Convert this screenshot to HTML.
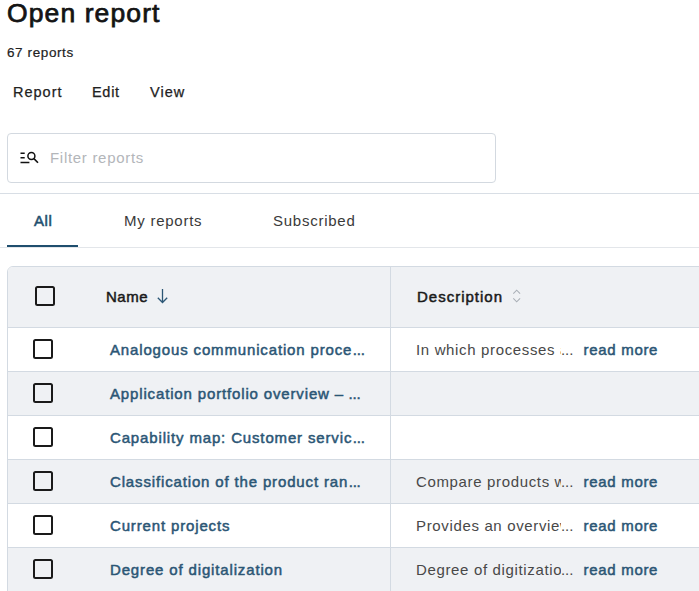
<!DOCTYPE html>
<html><head><meta charset="utf-8">
<style>
*{box-sizing:border-box;margin:0;padding:0}
html,body{width:699px;height:591px;overflow:hidden;background:#fff;font-family:"Liberation Sans",sans-serif;color:#1d1d1f}
.abs{position:absolute;white-space:nowrap}
#title{left:7px;top:-3px;font-size:26.5px;color:#141414;line-height:32px;letter-spacing:1.1px;-webkit-text-stroke:0.75px #141414}
#count{left:7px;top:45px;font-size:13.5px;color:#222;line-height:16px;letter-spacing:0.6px;-webkit-text-stroke:0.2px #222}
.menu{top:83px;font-size:14.5px;color:#222;line-height:18px;-webkit-text-stroke:0.25px #222;letter-spacing:0.7px}
#search{left:7px;top:133px;width:489px;height:50px;border:1px solid #d3d9e0;border-radius:4px}
#sep1{left:0;top:193px;width:699px;height:1px;background:#d8dee5}
.tab{top:212px;font-size:15px;line-height:18px;color:#3a3a3a;letter-spacing:0.75px}
#tabline{left:0;top:247px;width:699px;height:1px;background:#e3e6ea}
#tabsel{left:7px;top:245px;width:71px;height:2px;background:#1f4e6e}
#table{left:7px;top:266px;width:720px;height:340px;border:1px solid #d3dae2;border-radius:6px;overflow:hidden}
.row{position:absolute;left:0;width:720px;height:44px;border-top:1px solid #d3dae2}
.g{background:#eff1f4}
.cb{position:absolute;left:25.4px;top:11px;width:20px;height:20px;border:2px solid #1a1a1a;border-radius:2.5px}
.name{position:absolute;left:102px;top:13px;font-size:15px;color:#2b5675;line-height:18px;letter-spacing:0.85px;-webkit-text-stroke:0.5px #2b5675}
.name i{font-style:normal;letter-spacing:-0.2px;margin-left:0.5px}
.hd{position:absolute;top:22px;font-size:15px;color:#1a1a1a;line-height:18px;-webkit-text-stroke:0.5px #1a1a1a}
.desc{position:absolute;left:408px;top:13px;font-size:15px;color:#484848;line-height:18px;letter-spacing:0.65px}
.desc i{font-style:normal;letter-spacing:-0.1px}
.desc span{display:inline-block;overflow:hidden;vertical-align:top;width:145px}
.rm{position:absolute;left:575.5px;top:13px;font-size:15px;color:#2b5675;line-height:18px;letter-spacing:0.7px;-webkit-text-stroke:0.5px #2b5675}
#vdiv{position:absolute;left:382px;top:0;width:1px;height:340px;background:#d3dae2}
</style></head><body>
<div class="abs" id="title">Open report</div>
<div class="abs" id="count">67 reports</div>
<div class="abs menu" style="left:13px;letter-spacing:1px">Report</div>
<div class="abs menu" style="left:92px">Edit</div>
<div class="abs menu" style="left:150px;letter-spacing:1px">View</div>
<div class="abs" id="search">
  <svg style="position:absolute;left:12px;top:17px" width="20" height="14" viewBox="0 0 20 14">
    <path d="M0.5 2.2H4.7M0.5 6.7H4.7M0.5 11.4H9.4" stroke="#111" stroke-width="1.5" fill="none"/>
    <circle cx="11.4" cy="5" r="3.5" stroke="#111" stroke-width="1.5" fill="none"/>
    <path d="M13.9 7.6L18 11.7" stroke="#111" stroke-width="1.6"/>
  </svg>
  <div class="abs" style="left:42px;top:15px;font-size:15px;color:#b3b6ba;line-height:18px;letter-spacing:0.7px">Filter reports</div>
</div>
<div class="abs" id="sep1"></div>
<div class="abs tab" style="left:34px;color:#22506f;-webkit-text-stroke:0.55px #22506f;letter-spacing:0.6px">All</div>
<div class="abs tab" style="left:124px">My reports</div>
<div class="abs tab" style="left:273px">Subscribed</div>
<div class="abs" id="tabline"></div>
<div class="abs" id="tabsel"></div>
<div class="abs" id="table">
  <div class="row g" style="top:-1px;height:61px;border-top:none">
    <div class="cb" style="top:20px;left:26.8px"></div>
    <div class="hd" style="left:98px;letter-spacing:0.5px">Name</div>
    <svg style="position:absolute;left:148px;top:22px" width="12" height="16" viewBox="0 0 12 16"><path d="M6.5 1V14.5M1.8 9.8L6.5 14.5L11.2 9.8" stroke="#2b5675" stroke-width="1.3" fill="none"/></svg>
    <div class="hd" style="left:409px;letter-spacing:1px">Description</div>
    <svg style="position:absolute;left:504px;top:22px" width="10" height="16" viewBox="0 0 10 16"><path d="M1.3 5.6L4.7 2.2L8.1 5.6M1.3 10.4L4.7 13.8L8.1 10.4" stroke="#aab0b7" stroke-width="1.1" fill="none"/></svg>
  </div>
  <div class="row" style="top:60px">
    <div class="cb"></div>
    <div class="name">Analogous communication proce<i>...</i></div>
    <div class="desc"><span>In which processes are</span><i>...</i></div>
    <div class="rm">read more</div>
  </div>
  <div class="row g" style="top:104px">
    <div class="cb"></div>
    <div class="name">Application portfolio overview –<i> ...</i></div>
  </div>
  <div class="row" style="top:148px">
    <div class="cb"></div>
    <div class="name">Capability map: Customer servic<i>...</i></div>
  </div>
  <div class="row g" style="top:192px">
    <div class="cb"></div>
    <div class="name">Classification of the product ran<i>...</i></div>
    <div class="desc"><span>Compare products with</span><i>...</i></div>
    <div class="rm">read more</div>
  </div>
  <div class="row" style="top:236px">
    <div class="cb"></div>
    <div class="name">Current projects</div>
    <div class="desc"><span>Provides an overview</span><i>...</i></div>
    <div class="rm">read more</div>
  </div>
  <div class="row g" style="top:280px">
    <div class="cb"></div>
    <div class="name">Degree of digitalization</div>
    <div class="desc"><span>Degree of digitization</span><i>...</i></div>
    <div class="rm">read more</div>
  </div>
  <div id="vdiv"></div>
</div>
</body></html>
